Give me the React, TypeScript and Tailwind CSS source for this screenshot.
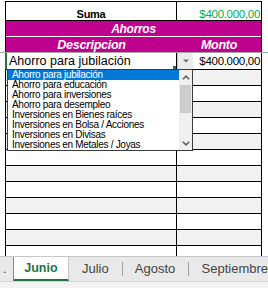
import React from 'react';

const options = [
  'Ahorro para jubilación',
  'Ahorro para educación',
  'Ahorro para inversiones',
  'Ahorro para desempleo',
  'Inversiones en Bienes raíces',
  'Inversiones en Bolsa / Acciones',
  'Inversiones en Divisas',
  'Inversiones en Metales / Joyas',
];

const rows = Array.from({ length: 12 }, (_, i) => i);

function Chevron({ up }: { up?: boolean }) {
  return (
    <svg width="8" height="5" viewBox="0 0 8 5" className="text-[#606060]">
      <path
        d={up ? 'M0.8 4.3 4 1.1 7.2 4.3' : 'M0.8 0.7 4 3.9 7.2 0.7'}
        fill="none"
        stroke="currentColor"
        strokeWidth="1.5"
      />
    </svg>
  );
}

export default function App() {
  return (
    <div className="flex h-[288px] w-[268px] flex-col overflow-hidden bg-white font-['Liberation_Sans',Arial,sans-serif]">
      {/* Sheet */}
      <div className="relative h-[256px] overflow-hidden">
        <div className="h-px" />

        {/* Header */}
        <div className="ml-[5px] w-[257px] border-x border-t border-black">
          <div className="grid h-[19px] grid-cols-[171px_84px] border-b border-black">
            <div className="flex items-end justify-center border-r border-black text-[11px] font-bold leading-[12px] tracking-[-0.3px] text-black">
              Suma
            </div>
            <div className="flex items-end justify-end pr-px text-[11.5px] leading-[12px] tracking-[-0.3px] text-[#00b050]">
              $400.000,00
            </div>
          </div>
          <div className="flex h-[16px] items-center justify-center border-b border-white bg-[#c0008e] text-[12px] font-bold italic leading-[12px] tracking-[-0.3px] text-white">
            Ahorros
          </div>
          <div className="grid h-[15px] grid-cols-[171px_84px] bg-[#c0008e] text-[12.5px] font-bold italic leading-[12px] tracking-[-0.3px] text-white">
            <div className="flex items-center justify-center">Descripcion</div>
            <div className="flex items-center justify-center">Monto</div>
          </div>
        </div>

        <div className="h-px bg-[#a6a6a6]" />

        {/* Body */}
        <div className="ml-[5px] w-[257px]">
          <div className="grid h-[17px] grid-cols-[171px_84px] border-b border-l border-r border-b-black border-l-[#217346] border-r-black">
            <div className="relative flex items-center border-r border-black pl-[3px] text-[12.5px] leading-[14px] text-black shadow-[inset_1px_0_0_#217346]">
              Ahorro para jubilación
              <div className="absolute bottom-0 right-0 h-[3px] w-[3px] bg-[#217346]" />
            </div>
            <div className="flex items-stretch">
              <div className="flex w-[16px] items-center justify-center border-l border-[#c8c8c8] bg-[#ececec]">
                <svg width="6" height="4" viewBox="0 0 6 4">
                  <path d="M0 0.5h6L3 3.5z" fill="#6d6d6d" />
                </svg>
              </div>
              <div className="flex flex-1 items-center justify-end pr-px text-[11.5px] leading-[14px] tracking-[-0.3px] text-black">
                $400.000,00
              </div>
            </div>
          </div>

          {rows.map((i) => (
            <div
              key={i}
              className={`grid h-[16px] grid-cols-[171px_84px] border-x border-b border-black ${
                i % 2 === 0 ? 'bg-[#f2f2f2]' : 'bg-white'
              }`}
            >
              <div className="border-r border-black" />
              <div />
            </div>
          ))}
        </div>

        {/* Dropdown list */}
        <div className="absolute left-[7px] top-[69px] flex h-[82px] w-[186px] border border-[#3c3c3c] bg-white">
          <div className="flex flex-1 flex-col">
            {options.map((o, i) => (
              <div
                key={o}
                className={`h-[10px] whitespace-nowrap pl-[4px] text-[10px] leading-[10px] tracking-[-0.3px] ${
                  i === 0 ? 'bg-[#0078d7] text-white' : 'text-black'
                }`}
              >
                {o}
              </div>
            ))}
          </div>
          <div className="flex w-[13px] flex-col bg-[#f0f0f0]">
            <div className="flex h-[15px] items-center justify-center">
              <Chevron up />
            </div>
            <div className="mx-auto h-[28px] w-[11px] bg-[#cdcdcd]" />
            <div className="flex-1" />
            <div className="flex h-[14px] items-center justify-center">
              <Chevron />
            </div>
          </div>
        </div>
      </div>

      {/* Sheet tabs */}
      <div className="flex h-[32px] flex-col">
        <div className="flex h-[25px] items-stretch overflow-hidden whitespace-nowrap border-t border-[#c6c6c6] bg-[#e9e9e9] text-[13px] text-[#444]">
          <div className="flex w-[13px] items-center pl-[3px]">.</div>
          <div className="flex w-[58px] items-center justify-center border-x border-b-2 border-l-[#8a8a8a] border-r-[#c6c6c6] border-b-[#217346] bg-white text-[12.5px] font-bold text-[#217346]">
            Junio
          </div>
          <div className="flex w-[54px] items-center justify-center">Julio</div>
          <div className="my-auto h-[14px] w-px bg-[#a0a0a0]" />
          <div className="flex w-[67px] items-center justify-center">Agosto</div>
          <div className="my-auto h-[14px] w-px bg-[#a0a0a0]" />
          <div className="flex items-center pl-[13px]">Septiembre</div>
        </div>
        <div className="flex-1 border-t border-[#d4d4d4] bg-[#f3f3f3]" />
      </div>
    </div>
  );
}
